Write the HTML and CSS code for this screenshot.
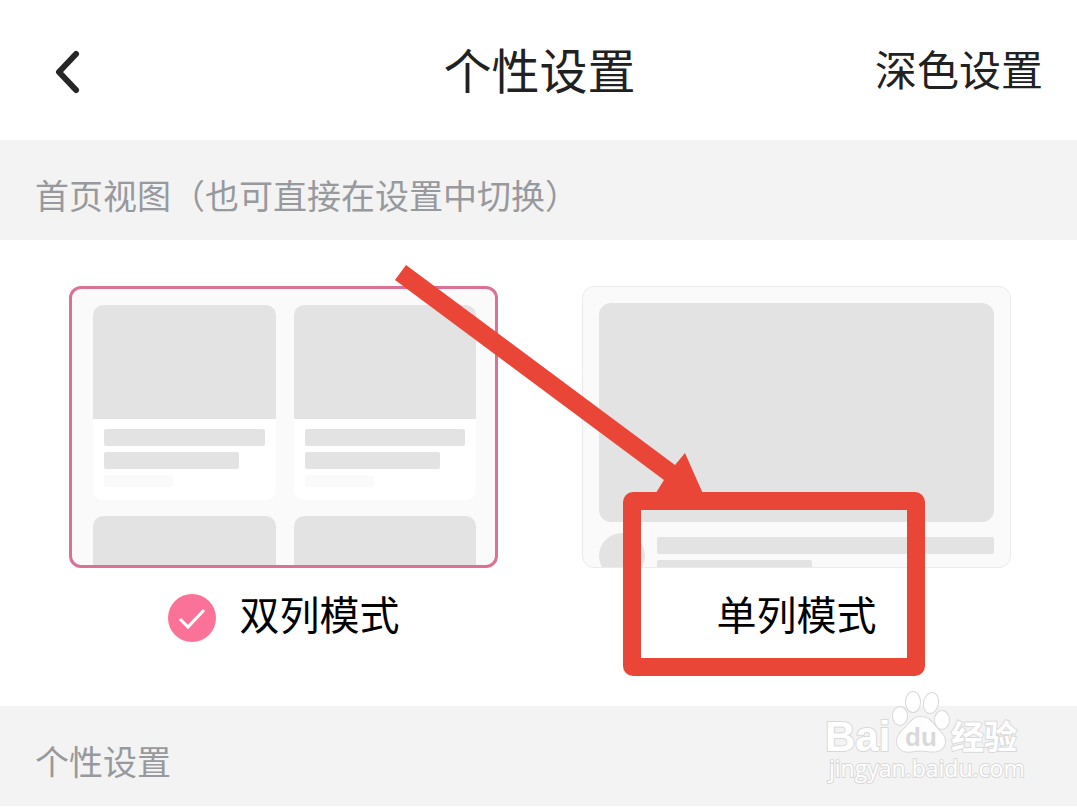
FILE: index.html
```html
<!DOCTYPE html>
<html lang="zh-CN">
<head>
    <meta charset="UTF-8">
    <meta name="viewport" content="width=device-width, initial-scale=1.0">
    <title>个性设置</title>
    <link rel="stylesheet" href="styles.css">
</head>
<body>
    <header class="header">
        <button class="back" type="button" aria-label="返回">
            <svg width="32" height="48" viewBox="0 0 32 48">
                <path d="M24 6 7 24 24 42" fill="none" stroke="#262626" stroke-width="6" stroke-linecap="round" stroke-linejoin="round"/>
            </svg>
        </button>
        <h1>个性设置</h1>
        <a class="dark-link" href="#">深色设置</a>
    </header>

    <main>
        <h2 class="section-title">首页视图（也可直接在设置中切换）</h2>

        <div class="view-options">
            <label class="option">
                <span class="preview preview-double">
                    <span class="tile"><span class="cover"></span><span class="line"></span><span class="line short"></span><span class="line faint"></span></span>
                    <span class="tile"><span class="cover"></span><span class="line"></span><span class="line short"></span><span class="line faint"></span></span>
                    <span class="tile"><span class="cover"></span></span>
                    <span class="tile"><span class="cover"></span></span>
                </span>
                <span class="option-name">
                    <input type="radio" name="view" checked>
                    <svg class="check" width="48" height="48" viewBox="0 0 48 48">
                        <circle cx="24" cy="24" r="24" fill="#fb7299"/>
                        <path d="M12 25 20 33 36 16" fill="none" stroke="#fff" stroke-width="3"/>
                    </svg>
                    <span class="option-text">双列模式</span>
                </span>
            </label>

            <label class="option">
                <span class="preview preview-single">
                    <span class="hero"></span>
                    <span class="info">
                        <span class="avatar"></span>
                        <span class="info-lines"><span class="line"></span><span class="line short"></span></span>
                    </span>
                </span>
                <span class="option-name">
                    <input type="radio" name="view">
                    <span class="option-text">单列模式</span>
                </span>
            </label>

            <!-- стрелка и рамка -->
            <svg class="pointer" viewBox="0 0 1077 466">
                <path d="M406 25 675 225 685 213 704 256H654L664 240 395 40Z" fill="#e94638"/>
                <rect x="632" y="261" width="284" height="166" rx="1" fill="none" stroke="#e94638" stroke-width="18" stroke-linejoin="round"/>
            </svg>
        </div>

        <h2 class="section-title">个性设置</h2>
    </main>

    <svg class="watermark" width="230" height="127" viewBox="0 0 230 127">
        <g class="mark">
            <ellipse cx="90" cy="36" rx="7" ry="9"/>
            <ellipse cx="103" cy="22" rx="7" ry="10"/>
            <ellipse cx="121" cy="23" rx="7" ry="10" transform="rotate(12 121 23)"/>
            <ellipse cx="132" cy="40" rx="7" ry="9"/>
            <path d="M110 37C103 37 100 43 95 48C90 53 87 56 87 62C88 71 96 73 105 71Q110 70 117 71C127 73 135 70 135 61C135 55 130 52 126 47C121 41 118 37 110 37Z"/>
            <text class="bai" x="15" y="71">Bai</text>
            <text class="jingyan" x="141" y="69">经验</text>
            <text class="site" x="19" y="97">jingyan.baidu.com</text>
        </g>
        <text class="du" x="95" y="66">du</text>
    </svg>
</body>
</html>
```
FILE: styles.css
```css
* {
    margin: 0;
    padding: 0;
    box-sizing: border-box;
}

body {
    position: relative;
    background-color: #fff;
    color: #212121;
    font-family: "Noto Sans CJK SC", sans-serif;
}

.header {
    display: grid;
    grid-template-columns: 1fr auto 1fr;
    align-items: center;
    height: 140px;
    padding: 4px 34px 0 52px;
}

.header h1 {
    font-size: 48px;
    font-weight: 400;
    line-height: 72px;
    padding: 0 16px 8px 0;
}

.back {
    width: 32px;
    height: 48px;
    border: none;
    background: none;
    cursor: pointer;
}

.back svg {
    display: block;
}

.dark-link {
    justify-self: end;
    padding-bottom: 8px;
    color: #212121;
    font-size: 42px;
    line-height: 64px;
    text-decoration: none;
}

.section-title {
    height: 100px;
    padding: 30px 35px 0;
    background-color: #f3f3f3;
    color: #98999d;
    font-size: 34px;
    font-weight: 400;
    line-height: 50px;
    white-space: nowrap;
}

.view-options {
    position: relative;
    display: grid;
    grid-template-columns: 1fr 1fr;
    gap: 84px;
    padding: 46px 66px 58px 69px;
}

.option {
    display: block;
    cursor: pointer;
}

.preview {
    width: 100%;
    height: 282px;
    border-radius: 12px;
    background-color: #fafafa;
    overflow: hidden;
}

.preview-double {
    display: grid;
    grid-template-columns: 1fr 1fr;
    grid-auto-rows: 195px;
    gap: 16px 18px;
    padding: 16px 19px 0 21px;
    border: 3px solid #db7296;
}

.preview-single {
    display: block;
    padding: 16px;
    border: 1px solid #ebebeb;
}

.tile {
    display: flex;
    flex-direction: column;
    gap: 6px;
    border-radius: 10px;
    background-color: #fff;
    overflow: hidden;
}

.cover {
    height: 114px;
    margin-bottom: 4px;
    background-color: #e3e3e3;
}

.line {
    height: 17px;
    border-radius: 2px;
    background-color: #e3e3e3;
}

.tile .line {
    width: 88%;
    margin-left: 11px;
}

.tile .short {
    width: 74%;
}

.tile .faint {
    width: 38%;
    height: 12px;
    background-color: #fafafa;
}

.hero {
    display: block;
    height: 219px;
    border-radius: 12px;
    background-color: #e3e3e3;
}

.info {
    display: flex;
    gap: 12px;
    padding-top: 11px;
}

.avatar {
    width: 46px;
    height: 46px;
    border-radius: 50%;
    background-color: #e3e3e3;
}

.info-lines {
    flex: 1;
    display: flex;
    flex-direction: column;
    gap: 6px;
    padding-top: 4px;
}

.info-lines .short {
    width: 46%;
}

.option-name {
    display: flex;
    justify-content: center;
    align-items: center;
    gap: 24px;
    height: 60px;
    margin-top: 20px;
    color: #000;
    font-size: 40px;
}

.option-name input {
    position: absolute;
    opacity: 0;
}

.option-text {
    padding-bottom: 10px;
    line-height: 60px;
}

.pointer {
    position: absolute;
    top: 0;
    left: 0;
    width: 100%;
    pointer-events: none;
}

/* Водяной знак */
.watermark {
    position: absolute;
    top: 680px;
    right: 37px;
    pointer-events: none;
}

.mark {
    fill: #fff;
    stroke: #d9d9d9;
    stroke-width: 2px;
    paint-order: stroke;
}

.watermark .bai {
    font-family: "Liberation Sans", sans-serif;
    font-size: 42px;
    font-weight: 700;
}

.watermark .jingyan {
    font-size: 33px;
    font-weight: 700;
}

.watermark .site {
    font-family: "Open Sans", sans-serif;
    font-size: 23px;
    font-weight: 400;
}

.watermark .du {
    fill: #d9d9d9;
    font-family: "Liberation Sans", sans-serif;
    font-size: 26px;
    font-weight: 700;
}
```
